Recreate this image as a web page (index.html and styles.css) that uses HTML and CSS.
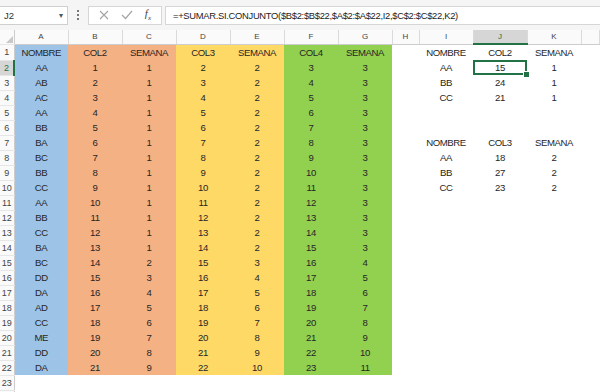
FILE: index.html
```
<!DOCTYPE html>
<html>
    <head>
        <title>Hoja1</title>
        <meta charset="utf-8"/>
        <link rel="stylesheet" href="styles.css">
    </head>
    <body class="body">
        <div class="bar">
            <div class="namebox">
                <span>J2</span>
                <span class="arrow">&#9662;</span>
            </div>
            <div class="dots"><i></i><i></i><i></i></div>
            <div class="btns">
                <svg width="10" height="10" viewBox="0 0 10 10"><path d="M1 1 L9 9 M9 1 L1 9" stroke="#a6a6a6" stroke-width="1.2" fill="none"/></svg>
                <svg width="12" height="10" viewBox="0 0 12 10"><path d="M1 5 L4.5 8.5 L11 1" stroke="#a6a6a6" stroke-width="1.2" fill="none"/></svg>
                <span class="fx">f<sub>x</sub></span>
            </div>
            <div class="formula">=+SUMAR.SI.CONJUNTO($B$2:$B$22,$A$2:$A$22,I2,$C$2:$C$22,K2)</div>
        </div>
        <table class="sheet">
            <colgroup>
                <col class="c-hdr"><col class="c"><col class="c"><col class="c"><col class="c"><col class="c"><col class="c"><col class="c"><col class="c-h"><col class="c"><col class="c"><col class="c"><col>
            </colgroup>
            <tr class="colhdr">
                <th class="corner"></th><th>A</th><th>B</th><th>C</th><th>D</th><th>E</th><th>F</th><th>G</th><th>H</th><th>I</th><th class="sel">J</th><th>K</th><th></th>
            </tr>
            <tr><th>1</th><td class="bl">NOMBRE</td><td class="or">COL2</td><td class="or">SEMANA</td><td class="ye">COL3</td><td class="ye">SEMANA</td><td class="gr">COL4</td><td class="gr">SEMANA</td><td></td><td>NOMBRE</td><td>COL2</td><td>SEMANA</td><td></td></tr>
            <tr><th class="sel">2</th><td class="bl">AA</td><td class="or">1</td><td class="or">1</td><td class="ye">2</td><td class="ye">2</td><td class="gr">3</td><td class="gr">3</td><td></td><td>AA</td><td class="active"><span>15</span></td><td>1</td><td></td></tr>
            <tr><th>3</th><td class="bl">AB</td><td class="or">2</td><td class="or">1</td><td class="ye">3</td><td class="ye">2</td><td class="gr">4</td><td class="gr">3</td><td></td><td>BB</td><td>24</td><td>1</td><td></td></tr>
            <tr><th>4</th><td class="bl">AC</td><td class="or">3</td><td class="or">1</td><td class="ye">4</td><td class="ye">2</td><td class="gr">5</td><td class="gr">3</td><td></td><td>CC</td><td>21</td><td>1</td><td></td></tr>
            <tr><th>5</th><td class="bl">AA</td><td class="or">4</td><td class="or">1</td><td class="ye">5</td><td class="ye">2</td><td class="gr">6</td><td class="gr">3</td><td></td><td></td><td></td><td></td><td></td></tr>
            <tr><th>6</th><td class="bl">BB</td><td class="or">5</td><td class="or">1</td><td class="ye">6</td><td class="ye">2</td><td class="gr">7</td><td class="gr">3</td><td></td><td></td><td></td><td></td><td></td></tr>
            <tr><th>7</th><td class="bl">BA</td><td class="or">6</td><td class="or">1</td><td class="ye">7</td><td class="ye">2</td><td class="gr">8</td><td class="gr">3</td><td></td><td>NOMBRE</td><td>COL3</td><td>SEMANA</td><td></td></tr>
            <tr><th>8</th><td class="bl">BC</td><td class="or">7</td><td class="or">1</td><td class="ye">8</td><td class="ye">2</td><td class="gr">9</td><td class="gr">3</td><td></td><td>AA</td><td>18</td><td>2</td><td></td></tr>
            <tr><th>9</th><td class="bl">BB</td><td class="or">8</td><td class="or">1</td><td class="ye">9</td><td class="ye">2</td><td class="gr">10</td><td class="gr">3</td><td></td><td>BB</td><td>27</td><td>2</td><td></td></tr>
            <tr><th>10</th><td class="bl">CC</td><td class="or">9</td><td class="or">1</td><td class="ye">10</td><td class="ye">2</td><td class="gr">11</td><td class="gr">3</td><td></td><td>CC</td><td>23</td><td>2</td><td></td></tr>
            <tr><th>11</th><td class="bl">AA</td><td class="or">10</td><td class="or">1</td><td class="ye">11</td><td class="ye">2</td><td class="gr">12</td><td class="gr">3</td><td></td><td></td><td></td><td></td><td></td></tr>
            <tr><th>12</th><td class="bl">BB</td><td class="or">11</td><td class="or">1</td><td class="ye">12</td><td class="ye">2</td><td class="gr">13</td><td class="gr">3</td><td></td><td></td><td></td><td></td><td></td></tr>
            <tr><th>13</th><td class="bl">CC</td><td class="or">12</td><td class="or">1</td><td class="ye">13</td><td class="ye">2</td><td class="gr">14</td><td class="gr">3</td><td></td><td></td><td></td><td></td><td></td></tr>
            <tr><th>14</th><td class="bl">BA</td><td class="or">13</td><td class="or">1</td><td class="ye">14</td><td class="ye">2</td><td class="gr">15</td><td class="gr">3</td><td></td><td></td><td></td><td></td><td></td></tr>
            <tr><th>15</th><td class="bl">BC</td><td class="or">14</td><td class="or">2</td><td class="ye">15</td><td class="ye">3</td><td class="gr">16</td><td class="gr">4</td><td></td><td></td><td></td><td></td><td></td></tr>
            <tr><th>16</th><td class="bl">DD</td><td class="or">15</td><td class="or">3</td><td class="ye">16</td><td class="ye">4</td><td class="gr">17</td><td class="gr">5</td><td></td><td></td><td></td><td></td><td></td></tr>
            <tr><th>17</th><td class="bl">DA</td><td class="or">16</td><td class="or">4</td><td class="ye">17</td><td class="ye">5</td><td class="gr">18</td><td class="gr">6</td><td></td><td></td><td></td><td></td><td></td></tr>
            <tr><th>18</th><td class="bl">AD</td><td class="or">17</td><td class="or">5</td><td class="ye">18</td><td class="ye">6</td><td class="gr">19</td><td class="gr">7</td><td></td><td></td><td></td><td></td><td></td></tr>
            <tr><th>19</th><td class="bl">CC</td><td class="or">18</td><td class="or">6</td><td class="ye">19</td><td class="ye">7</td><td class="gr">20</td><td class="gr">8</td><td></td><td></td><td></td><td></td><td></td></tr>
            <tr><th>20</th><td class="bl">ME</td><td class="or">19</td><td class="or">7</td><td class="ye">20</td><td class="ye">8</td><td class="gr">21</td><td class="gr">9</td><td></td><td></td><td></td><td></td><td></td></tr>
            <tr><th>21</th><td class="bl">DD</td><td class="or">20</td><td class="or">8</td><td class="ye">21</td><td class="ye">9</td><td class="gr">22</td><td class="gr">10</td><td></td><td></td><td></td><td></td><td></td></tr>
            <tr><th>22</th><td class="bl">DA</td><td class="or">21</td><td class="or">9</td><td class="ye">22</td><td class="ye">10</td><td class="gr">23</td><td class="gr">11</td><td></td><td></td><td></td><td></td><td></td></tr>
            <tr><th>23</th><td></td><td></td><td></td><td></td><td></td><td></td><td></td><td></td><td></td><td></td><td></td><td></td></tr>
            <tr><th></th><td></td><td></td><td></td><td></td><td></td><td></td><td></td><td></td><td></td><td></td><td></td><td></td></tr>
        </table>
    </body>
</html>
```

FILE: styles.css
```
.body{
    margin:0px;
    background-color:white;
    font-family:"Liberation Sans",Arial,sans-serif;
    color:#222;
    overflow:hidden;
}
.bar{
    height:30px;
    background-color:#f5f5f5;
    display:flex;
    align-items:center;
}
.namebox{
    width:68px;
    height:19px;
    box-sizing:border-box;
    background-color:white;
    border:1px solid #cfcfcf;
    border-left:none;
    display:flex;
    align-items:center;
    justify-content:space-between;
    padding:0 4px 0 4px;
    font-size:9.5px;
    color:#333;
}
.arrow{
    font-size:8px;
    color:#555;
}
.dots{
    width:20px;
    display:flex;
    flex-direction:column;
    align-items:center;
    gap:2px;
}
.dots i{
    width:2px;
    height:2px;
    background-color:#777;
}
.btns{
    width:74px;
    height:19px;
    box-sizing:border-box;
    background-color:white;
    border:1px solid #d6d6d6;
    display:flex;
    align-items:center;
    justify-content:space-around;
    padding:0 4px;
}
.fx{
    font-family:"Liberation Serif",serif;
    font-style:italic;
    font-size:11px;
    color:#444;
}
.fx sub{
    font-size:7px;
}
.formula{
    flex:1;
    height:19px;
    box-sizing:border-box;
    margin-left:3px;
    background-color:white;
    border:1px solid #d6d6d6;
    border-right:none;
    font-size:9.4px;
    letter-spacing:-0.3px;
    line-height:17px;
    padding-left:7px;
    color:#222;
    white-space:nowrap;
}
.sheet{
    border-collapse:collapse;
    table-layout:fixed;
    width:600px;
}
.c-hdr{width:14px;}
.c{width:54px;}
.c-h{width:27px;}
.sheet td{
    height:15px;
    padding:0;
    font-size:9.6px;
    letter-spacing:-0.4px;
    text-align:center;
    white-space:nowrap;
    color:#262626;
}
.sheet th{
    padding:0;
    font-weight:normal;
    color:#444;
    background-color:#fafafa;
}
.sheet tr th:first-child{
    font-size:9px;
    border-right:1px solid #cdcdcd;
    border-bottom:1px solid #e6e6e6;
    text-align:center;
}
.colhdr th{
    height:13px;
    font-size:8px;
    border-right:1px solid #dadada;
    border-bottom:1px solid #cdcdcd;
}
.colhdr th.corner{
    position:relative;
}
.corner::after{
    content:'';
    position:absolute;
    right:1px;
    bottom:1px;
    border-left:7px solid transparent;
    border-bottom:7px solid #c8c8c8;
}
.sheet th.sel{
    background-color:#d6d6d6;
    color:#217346;
}
.colhdr th.sel{
    border-bottom:2px solid #217346;
}
.sheet tr th.sel:first-child{
    border-right:2px solid #217346;
}
.bl{background-color:#9dc3e6;}
.or{background-color:#f4b183;}
.ye{background-color:#ffd966;}
.gr{background-color:#92d050;}
.active{
    position:relative;
    outline:2px solid #217346;
    outline-offset:-2px;
}
.active::after{
    content:'';
    position:absolute;
    right:-3px;
    bottom:-3px;
    width:5px;
    height:5px;
    background-color:#217346;
    border:1px solid white;
}
```
